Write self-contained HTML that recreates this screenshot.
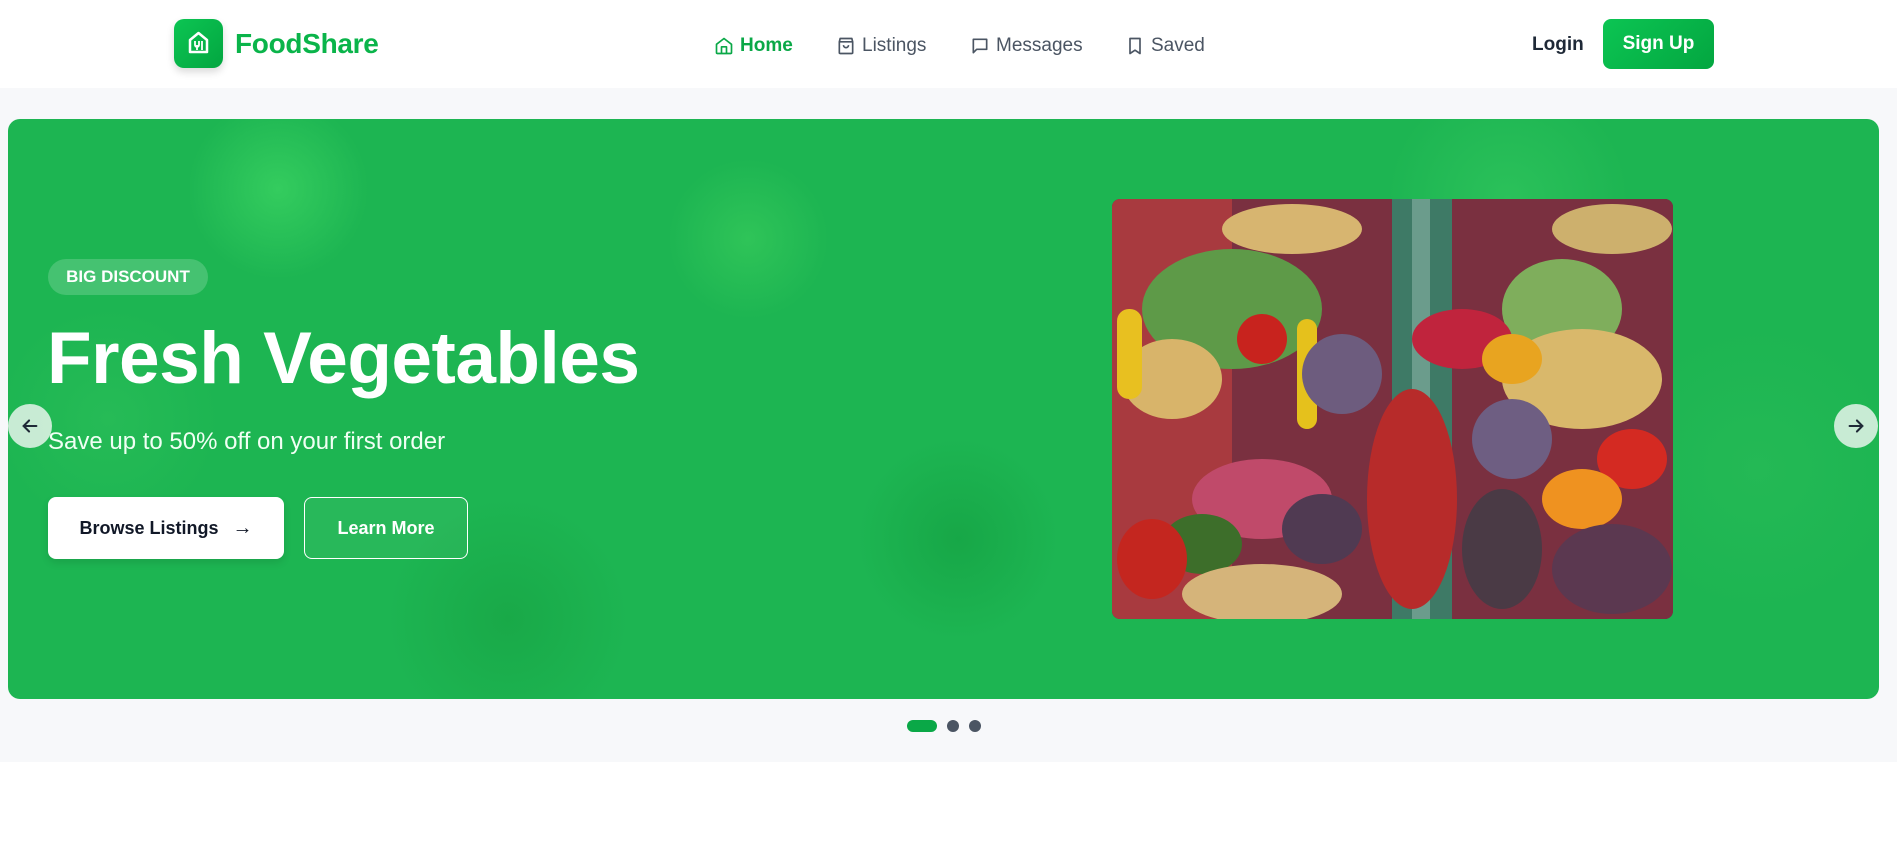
<!DOCTYPE html>
<html><head><meta charset="utf-8"><style>
*{box-sizing:border-box;margin:0;padding:0}
body{width:1897px;height:849px;background:#fff;font-family:"Liberation Sans",sans-serif;position:relative;overflow:hidden}
.nav{position:absolute;left:0;top:0;width:1897px;height:88px;background:#fff}
.logo{position:absolute;left:174px;top:19px;width:49px;height:49px;border-radius:10px;background:linear-gradient(135deg,#0cc553,#03a640);box-shadow:0 4px 8px rgba(0,0,0,.15)}
.brand{position:absolute;left:235px;top:28px;font-size:28px;font-weight:bold;color:#0ab44a;letter-spacing:-0.3px}
.nl{position:absolute;top:35px;font-size:19px;color:#4b5563;display:flex;align-items:center;gap:6px}
.nl svg{width:20px;height:20px}
.login{position:absolute;left:1532px;top:34px;font-size:19px;font-weight:bold;color:#1f2937}
.signup{position:absolute;left:1603px;top:19px;width:111px;height:50px;border-radius:8px;background:linear-gradient(135deg,#0cc553,#03a640);color:#fff;font-size:19px;font-weight:bold;text-align:center;line-height:50px}
.band{position:absolute;left:0;top:88px;width:1897px;height:674px;background:#f7f8fa}
.hero{position:absolute;left:8px;top:119px;width:1871px;height:580px;border-radius:12px;overflow:hidden;background:#1db552;
background-image:radial-gradient(circle at 270px 70px,#34cc5e 0,transparent 90px),radial-gradient(circle at 740px 120px,#2fc458 0,transparent 80px),radial-gradient(circle at 500px 500px,#19a948 0,transparent 120px),radial-gradient(circle at 1500px 80px,#2bc15a 0,transparent 120px),radial-gradient(circle at 1750px 350px,#24b955 0,transparent 140px),radial-gradient(circle at 950px 420px,#17a747 0,transparent 100px),radial-gradient(circle at 100px 300px,#26bb56 0,transparent 110px)}
.badge{position:absolute;left:40px;top:140px;width:160px;height:36px;border-radius:18px;background:rgba(255,255,255,.18);color:#fff;font-weight:bold;font-size:17px;text-align:center;line-height:36px}
.title{position:absolute;left:39px;top:198px;font-size:73px;font-weight:bold;color:#fff;letter-spacing:-0.5px}
.sub{position:absolute;left:40px;top:309px;font-size:24px;color:#f0fff4}
.b1{position:absolute;left:40px;top:378px;width:236px;height:62px;background:#fff;border-radius:8px;color:#111827;font-size:18px;font-weight:bold;display:flex;align-items:center;justify-content:center;gap:14px;box-shadow:0 4px 8px rgba(0,0,0,.1)}
.b2{position:absolute;left:296px;top:378px;width:164px;height:62px;border:1.5px solid #fff;border-radius:8px;color:#fff;font-size:18px;font-weight:bold;display:flex;align-items:center;justify-content:center;background:rgba(255,255,255,.05)}
.img{position:absolute;left:1104px;top:80px;width:561px;height:420px;border-radius:8px;overflow:hidden;background:#6b2a3a}
.arr{position:absolute;width:44px;height:44px;border-radius:50%;background:rgba(230,245,235,.85);display:flex;align-items:center;justify-content:center}
.dot{position:absolute;top:720px;width:12px;height:12px;border-radius:6px;background:#4b5563}
</style></head><body>
<div class="nav">
 <div class="logo"><svg width="49" height="49" viewBox="0 0 49 49"><path d="M16 33V21l8.5-7 8.5 7v12z" fill="none" stroke="#fff" stroke-width="2.5" stroke-linejoin="round"/><path d="M21 22v4a2 2 0 0 0 4 0v-4M23 26v5M28 22v9" stroke="#fff" stroke-width="1.8" fill="none"/></svg></div>
 <div class="brand">FoodShare</div>
 <div class="nl" style="left:714px;color:#0aa847;font-weight:bold"><svg viewBox="0 0 24 24" fill="none" stroke="#0aa847" stroke-width="2" stroke-linejoin="round"><path d="M3 10l9-7 9 7v10a1 1 0 0 1-1 1H4a1 1 0 0 1-1-1z"/><path d="M9 21v-8h6v8"/></svg>Home</div>
 <div class="nl" style="left:836px"><svg viewBox="0 0 24 24" fill="none" stroke="#4b5563" stroke-width="2" stroke-linejoin="round"><path d="M5 3h14l1 4v13a1 1 0 0 1-1 1H5a1 1 0 0 1-1-1V7z"/><path d="M4 7h16M9 11a3 3 0 0 0 6 0"/></svg>Listings</div>
 <div class="nl" style="left:970px"><svg viewBox="0 0 24 24" fill="none" stroke="#4b5563" stroke-width="2" stroke-linejoin="round"><path d="M4 4h16v12H8l-4 4z"/></svg>Messages</div>
 <div class="nl" style="left:1125px"><svg viewBox="0 0 24 24" fill="none" stroke="#4b5563" stroke-width="2" stroke-linejoin="round"><path d="M6 3h12v18l-6-4-6 4z"/></svg>Saved</div>
 <div class="login">Login</div>
 <div class="signup">Sign Up</div>
</div>
<div class="band"></div>
<div class="hero">
 <div class="img"><svg width="561" height="420" viewBox="0 0 561 420">
  <rect width="561" height="420" fill="#7a3040"/>
  <rect x="0" y="0" width="120" height="420" fill="#a83a3f"/>
  <rect x="280" y="0" width="60" height="420" fill="#3e7a66"/>
  <rect x="300" y="0" width="18" height="420" fill="#6b9c8c"/>
  <ellipse cx="120" cy="110" rx="90" ry="60" fill="#5e9a48"/>
  <ellipse cx="450" cy="110" rx="60" ry="50" fill="#7fae5c"/>
  <ellipse cx="60" cy="180" rx="50" ry="40" fill="#d8b46a"/>
  <ellipse cx="470" cy="180" rx="80" ry="50" fill="#d9b86b"/>
  <ellipse cx="180" cy="30" rx="70" ry="25" fill="#d7b570"/>
  <ellipse cx="500" cy="30" rx="60" ry="25" fill="#cdb06d"/>
  <ellipse cx="150" cy="140" rx="25" ry="25" fill="#c8231e"/>
  <ellipse cx="350" cy="140" rx="50" ry="30" fill="#c0243d"/>
  <rect x="5" y="110" width="25" height="90" rx="12" fill="#e8c020"/>
  <rect x="185" y="120" width="20" height="110" rx="10" fill="#e5c11c"/>
  <ellipse cx="230" cy="175" rx="40" ry="40" fill="#6d5c7e"/>
  <ellipse cx="400" cy="240" rx="40" ry="40" fill="#6e5e82"/>
  <ellipse cx="400" cy="160" rx="30" ry="25" fill="#e8a420"/>
  <ellipse cx="520" cy="260" rx="35" ry="30" fill="#d42a22"/>
  <ellipse cx="470" cy="300" rx="40" ry="30" fill="#ef9220"/>
  <ellipse cx="500" cy="370" rx="60" ry="45" fill="#5b3850"/>
  <ellipse cx="300" cy="300" rx="45" ry="110" fill="#b72b2a"/>
  <ellipse cx="150" cy="300" rx="70" ry="40" fill="#c04a6a"/>
  <ellipse cx="90" cy="345" rx="40" ry="30" fill="#3d6e2a"/>
  <ellipse cx="40" cy="360" rx="35" ry="40" fill="#c4261f"/>
  <ellipse cx="150" cy="395" rx="80" ry="30" fill="#d5b47a"/>
  <ellipse cx="210" cy="330" rx="40" ry="35" fill="#503a52"/>
  <ellipse cx="390" cy="350" rx="40" ry="60" fill="#4a3a45"/>
 </svg></div>
 <div class="badge">BIG DISCOUNT</div>
 <div class="title">Fresh Vegetables</div>
 <div class="sub">Save up to 50% off on your first order</div>
 <div class="b1">Browse Listings <span style="font-size:20px">→</span></div>
 <div class="b2">Learn More</div>
 <div class="arr" style="left:0;top:285px"><svg width="22" height="22" viewBox="0 0 24 24" fill="none" stroke="#1f2937" stroke-width="2.2" stroke-linecap="round"><path d="M19 12H5M11 6l-6 6 6 6"/></svg></div>
 <div class="arr" style="left:1826px;top:285px"><svg width="22" height="22" viewBox="0 0 24 24" fill="none" stroke="#1f2937" stroke-width="2.2" stroke-linecap="round"><path d="M5 12h14M13 6l6 6-6 6"/></svg></div>
</div>
<div class="dot" style="left:907px;width:30px;background:#0aa847"></div>
<div class="dot" style="left:947px"></div>
<div class="dot" style="left:969px"></div>
</body></html>
